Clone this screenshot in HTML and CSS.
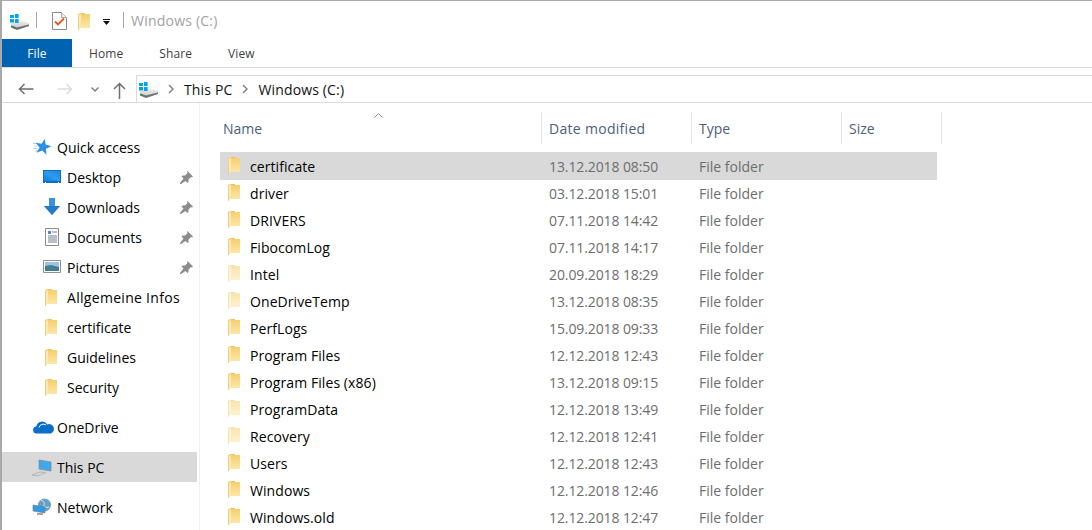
FILE: index.html
```html
<!DOCTYPE html>
<html lang="en">
<head>
<meta charset="utf-8">
<title>Windows (C:)</title>
<link rel="stylesheet" href="styles.css">
</head>
<body>
<svg class="defs" width="0" height="0" aria-hidden="true">
  <defs>
    <linearGradient id="fg" x1="0" y1="0" x2="0" y2="1"><stop offset="0" stop-color="#f5cf6e"/><stop offset="1" stop-color="#fde7a6"/></linearGradient>
    <linearGradient id="scr" x1="0" y1="1" x2="1" y2="0"><stop offset="0" stop-color="#0f7fdc"/><stop offset=".5" stop-color="#2f9af0"/><stop offset="1" stop-color="#1f86e0"/></linearGradient>
    <linearGradient id="disk" x1="0" y1="0" x2="0" y2="1"><stop offset="0" stop-color="#f4f4f4"/><stop offset="1" stop-color="#c4c4c4"/></linearGradient>
    <symbol id="folder" viewBox="0 0 12 17">
      <path d="M3 1h9v14H3z" fill="url(#fg)"/>
      <path d="M3 0h4v1H3z" fill="#e8c368"/>
      <path d="M0 1l3-1v15l-3 2z" fill="#fbe9b5"/>
      <path d="M0 1l3-1v1L1 2v15H0z" fill="#f0cf80"/>
    </symbol>
    <symbol id="drive" viewBox="0 0 20 16">
      <path d="M1 9l9-3 9 3v3L7 15l-6-2z" fill="url(#disk)"/>
      <path d="M1 11.500l6 2 12-3V12L7 16l-6-2.500z" fill="#6f6f6f"/>
      <path d="M2 12h2v2H2z" fill="#3b8f4a"/>
      <path d="M0 1h4v3H0zM5 0h3.600v4H5zM0 5h4v3.500H0zM5 5h3.600v4H5z" fill="#00a4ef"/>
    </symbol>
    <symbol id="pin" viewBox="0 0 13 13">
      <path d="M7.500 0L13 5.500l-1 1-1-.5-2.500 2.500v2.500l-1 1-2-2L1 13H0v-1l3.500-4.500-2-2 1-1H5L7.500 2 7 1z" fill="#8c8c8c"/>
    </symbol>
  </defs>
</svg>
<div class="window">
  <header class="titlebar">
    <svg class="t-drive"><use href="#drive"/></svg>
    <span class="t-sep"></span>
    <svg class="t-check" viewBox="0 0 15 18">
      <path d="M.5.5h9l5 5v12H.5z" fill="#fff" stroke="#8a8a8a"/>
      <path d="M9.500.5v5h5" fill="#eee" stroke="#a8a8a8"/>
      <path d="M3 9.500l3 3 6-6" fill="none" stroke="#e8551f" stroke-width="1.800"/>
    </svg>
    <svg class="t-folder"><use href="#folder"/></svg>
    <svg class="t-drop" viewBox="0 0 7 6"><path d="M0 0h7v1H0zM0 2h7L3.500 6z" fill="#111"/></svg>
    <span class="t-sep t-sep2"></span>
    <span class="t-title">Windows (C:)</span>
  </header>
  <nav class="tabs">
    <span class="tab tab-file">File</span>
    <span class="tab tab-home">Home</span>
    <span class="tab tab-share">Share</span>
    <span class="tab tab-view">View</span>
  </nav>
  <div class="addr-row">
    <div class="nav-btns">
      <svg class="n-back" viewBox="0 0 16 12"><path d="M15.500 6H1.500M6.500 1l-5 5 5 5" fill="none" stroke="#6e6e6e" stroke-width="1.500"/></svg>
      <svg class="n-fwd" viewBox="0 0 16 12"><path d="M.5 6h14M9.500 1l5 5-5 5" fill="none" stroke="#dcdcdc" stroke-width="1.500"/></svg>
      <svg class="n-down" viewBox="0 0 8 5"><path d="M.5.5L4 4 7.500.5" fill="none" stroke="#7a7a7a" stroke-width="1.400"/></svg>
      <svg class="n-up" viewBox="0 0 13 17"><path d="M6.500 17V1.500M1 7l5.500-5.500L12 7" fill="none" stroke="#6e6e6e" stroke-width="1.500"/></svg>
    </div>
    <div class="addr-box">
      <svg class="a-drive"><use href="#drive"/></svg>
      <svg class="a-chev a-chev1" viewBox="0 0 6 10"><path d="M1 1l4 4-4 4" fill="none" stroke="#777" stroke-width="1.300"/></svg>
      <span class="crumb">This PC</span>
      <svg class="a-chev a-chev2" viewBox="0 0 6 10"><path d="M1 1l4 4-4 4" fill="none" stroke="#777" stroke-width="1.300"/></svg>
      <span class="crumb">Windows (C:)</span>
    </div>
  </div>
  <div class="main">
    <aside class="sidebar">
      <div class="side-row top">
        <svg class="s-ico" viewBox="0 0 18 18"><path d="M0 5.500h5M1.500 8h3M0 10.500h4M2 13h3" stroke="#a9d2f3"/><path transform="translate(10 9) rotate(12)" d="M0-8.500L2.100-2.900 8.100-2.600 3.300 1.100 5 6.900 0 3.500-5 6.900-3.300 1.100-8.100-2.600-2.100-2.900z" fill="#2d8fe6"/></svg>
        <span>Quick access</span>
      </div>
      <div class="side-row sub">
        <svg class="s-ico" viewBox="0 0 18 18"><path d="M0 2h18v13H0z" fill="#0e6fc0"/><path d="M1 3h16v10H1z" fill="url(#scr)"/><path d="M2 14h1v1H2zM15 14h1v1h-1z" fill="#fff"/></svg>
        <span>Desktop</span><svg class="pin"><use href="#pin"/></svg>
      </div>
      <div class="side-row sub">
        <svg class="s-ico" viewBox="0 0 18 18"><path d="M6 0h6v8h5l-8 9-8-9h5z" fill="#3d8fe0"/><path d="M9 17L1 8h16z" fill="#2a78c8"/></svg>
        <span>Downloads</span><svg class="pin"><use href="#pin"/></svg>
      </div>
      <div class="side-row sub">
        <svg class="s-ico" viewBox="0 0 18 18"><path d="M2.500.5h13v17h-13z" fill="#fff" stroke="#8b8b8b"/><path d="M5 3h3v3H5z" fill="#4a8ed0"/><path d="M9 4h5M5 8h9M5 10h9M5 12h9M5 14h9" stroke="#6f7f8f"/></svg>
        <span>Documents</span><svg class="pin"><use href="#pin"/></svg>
      </div>
      <div class="side-row sub">
        <svg class="s-ico" viewBox="0 0 18 18"><path d="M.5 2.500h17v12H.5z" fill="#fff" stroke="#8f8f8f"/><path d="M2 4h14v5H2z" fill="#9cc4e4"/><path d="M2 8l6-1 8 2v4H2z" fill="#3f7f8f"/></svg>
        <span>Pictures</span><svg class="pin"><use href="#pin"/></svg>
      </div>
      <div class="side-row sub"><svg class="s-fld"><use href="#folder"/></svg><span class="wide">Allgemeine Infos</span></div>
      <div class="side-row sub"><svg class="s-fld"><use href="#folder"/></svg><span>certificate</span></div>
      <div class="side-row sub"><svg class="s-fld"><use href="#folder"/></svg><span>Guidelines</span></div>
      <div class="side-row sub"><svg class="s-fld"><use href="#folder"/></svg><span>Security</span></div>
      <div class="side-row top group">
        <svg class="s-ico" viewBox="0 0 18 18"><path d="M4 15.500a3.500 3.500 0 0 1-.7-7 6 6 0 0 1 11-2 4.500 4.500 0 0 1 3.700 9z" fill="#0a6fc8"/><path d="M6 9.500a4.500 4.500 0 0 1 7-2.500" fill="none" stroke="#fff"/></svg>
        <span>OneDrive</span>
      </div>
      <div class="side-row top group selected">
        <svg class="s-ico" viewBox="0 0 18 18"><path d="M6 2l12 2v9L6 11z" fill="#3fa9ee" stroke="#7a8a96" stroke-width=".7"/><path d="M-1 17l8-3 6 .5-8 3.500z" fill="none" stroke="#b5b5b5"/></svg>
        <span>This PC</span>
      </div>
      <div class="side-row top group">
        <svg class="s-ico" viewBox="0 0 18 18"><circle cx="11.500" cy="7" r="6.500" fill="#6a9fc4"/><path d="M8 2c3 1 4 3 3 5s3 3 5 2" fill="none" stroke="#d9e7f0"/><path d="M0 7l12 2v6L0 13z" fill="#2f9be6" stroke="#6a7a88" stroke-width=".6"/><path d="M4 16h6" stroke="#8a8a8a" stroke-width="1.500"/></svg>
        <span>Network</span>
      </div>
    </aside>
    <section class="content">
      <div class="head">
        <div class="hcell hname">Name<svg class="caret" viewBox="0 0 9 5"><path d="M.5 4.500L4.500.5l4 4" fill="none" stroke="#8a8a8a"/></svg></div>
        <div class="hcell hdate">Date modified</div>
        <div class="hcell">Type</div>
        <div class="hcell">Size</div>
      </div>
      <div class="list">
        <div class="row selected"><span class="name"><svg class="fld"><use href="#folder"/></svg>certificate</span><span class="meta date">13.12.2018 08:50</span><span class="meta">File folder</span></div>
        <div class="row"><span class="name"><svg class="fld"><use href="#folder"/></svg>driver</span><span class="meta date">03.12.2018 15:01</span><span class="meta">File folder</span></div>
        <div class="row"><span class="name"><svg class="fld"><use href="#folder"/></svg>DRIVERS</span><span class="meta date">07.11.2018 14:42</span><span class="meta">File folder</span></div>
        <div class="row"><span class="name"><svg class="fld"><use href="#folder"/></svg>FibocomLog</span><span class="meta date">07.11.2018 14:17</span><span class="meta">File folder</span></div>
        <div class="row"><span class="name"><svg class="fld faded"><use href="#folder"/></svg>Intel</span><span class="meta date">20.09.2018 18:29</span><span class="meta">File folder</span></div>
        <div class="row"><span class="name"><svg class="fld faded"><use href="#folder"/></svg>OneDriveTemp</span><span class="meta date">13.12.2018 08:35</span><span class="meta">File folder</span></div>
        <div class="row"><span class="name"><svg class="fld"><use href="#folder"/></svg>PerfLogs</span><span class="meta date">15.09.2018 09:33</span><span class="meta">File folder</span></div>
        <div class="row"><span class="name"><svg class="fld"><use href="#folder"/></svg>Program Files</span><span class="meta date">12.12.2018 12:43</span><span class="meta">File folder</span></div>
        <div class="row"><span class="name"><svg class="fld"><use href="#folder"/></svg>Program Files (x86)</span><span class="meta date">13.12.2018 09:15</span><span class="meta">File folder</span></div>
        <div class="row"><span class="name"><svg class="fld faded"><use href="#folder"/></svg>ProgramData</span><span class="meta date">12.12.2018 13:49</span><span class="meta">File folder</span></div>
        <div class="row"><span class="name"><svg class="fld faded"><use href="#folder"/></svg>Recovery</span><span class="meta date">12.12.2018 12:41</span><span class="meta">File folder</span></div>
        <div class="row"><span class="name"><svg class="fld"><use href="#folder"/></svg>Users</span><span class="meta date">12.12.2018 12:43</span><span class="meta">File folder</span></div>
        <div class="row"><span class="name"><svg class="fld"><use href="#folder"/></svg>Windows</span><span class="meta date">12.12.2018 12:46</span><span class="meta">File folder</span></div>
        <div class="row"><span class="name"><svg class="fld"><use href="#folder"/></svg>Windows.old</span><span class="meta date">12.12.2018 12:47</span><span class="meta">File folder</span></div>
      </div>
    </section>
  </div>
</div>
</body>
</html>
```
FILE: styles.css
```css
* { box-sizing: border-box; }
html, body { margin: 0; padding: 0; height: 100%; overflow: hidden; background: #fff; }
body { font-family: "Open Sans", "Noto Sans", sans-serif; font-size: 14px; color: #000; }
.defs { position: absolute; }
svg { display: block; flex: none; overflow: visible; }

.window { width: 1092px; height: 530px; display: flex; flex-direction: column; border-left: 2px solid #a9a9a9; border-top: 1px solid #a9a9a9; overflow: hidden; }

.titlebar { height: 38px; display: flex; align-items: center; flex: none; }
.t-drive { width: 20px; height: 16px; margin-left: 8px; margin-top: 3px; }
.t-sep { width: 1px; height: 16px; background: #a6a6a6; margin-left: 6px; }
.t-check { width: 15px; height: 18px; margin-left: 15px; margin-top: 2px; }
.t-folder { width: 12px; height: 17px; margin-left: 11px; margin-top: 2px; }
.t-drop { width: 7px; height: 6px; margin-left: 13px; margin-top: 4px; }
.t-sep2 { margin-left: 13px; }
.t-title { margin-left: 7px; color: #a2a2a2; letter-spacing: .22px; }

.tabs { height: 29px; display: flex; flex: none; font-size: 12px; color: #3f3f3f; border-bottom: 1px solid #dadada; letter-spacing: .1px; }
.tab { display: flex; align-items: center; justify-content: center; height: 28px; }
.tab-file { width: 70px; background: #0063b1; color: #fff; }
.tab-home { margin-left: 17px; }
.tab-share { margin-left: 36px; }
.tab-view { margin-left: 36px; }

.addr-row { height: 35px; display: flex; flex: none; align-items: flex-start; padding-top: 7px; border-bottom: 1px solid #dadada; }
.nav-btns { width: 134px; height: 28px; display: flex; align-items: center; flex: none; }
.n-back { width: 16px; height: 12px; margin-left: 16px; }
.n-fwd { width: 16px; height: 12px; margin-left: 23px; }
.n-down { width: 8px; height: 5px; margin-left: 18px; }
.n-up { width: 13px; height: 17px; margin-left: 14px; margin-top: 2px; }
.addr-box { flex: 1; height: 28px; display: flex; align-items: center; border: 1px solid #d9d9d9; border-right: 0; }
.a-drive { width: 20px; height: 16px; margin-left: 2px; margin-top: 2px; }
.a-chev { width: 6px; height: 10px; }
.a-chev1 { margin-left: 9px; margin-right: 10px; }
.a-chev2 { margin-left: 10px; margin-right: 10px; }
.crumb { color: #111; letter-spacing: .15px; }

.main { flex: 1; display: flex; min-height: 0; }
.sidebar { width: 198px; flex: none; border-right: 1px solid #efefef; padding-top: 29px; }
.side-row { height: 30px; display: flex; align-items: center; gap: 6px; width: 195px; color: #000; }
.side-row.top { padding-left: 31px; }
.side-row.sub { padding-left: 41px; }
.side-row.group { margin-top: 10px; }
.side-row.selected { background: #d9d9d9; }
.s-ico { width: 18px; height: 18px; }
.s-fld { width: 12px; height: 17px; margin-left: 2px; margin-right: 4px; }
.wide { letter-spacing: .3px; }
.pin { width: 13px; height: 13px; margin-left: auto; margin-right: 4px; }

.content { flex: 1; min-width: 0; padding-left: 20px; }
.head { display: grid; grid-template-columns: 322px 150px 150px 100px; height: 32px; margin-top: 9px; color: #4c607a; width: 722px; }
.hcell { display: flex; align-items: center; padding-left: 7px; border-right: 1px solid #e5e5e5; position: relative; }
.hname { padding-left: 3px; }
.hdate { letter-spacing: .3px; }
.caret { position: absolute; left: 154px; top: 1px; width: 9px; height: 5px; }
.list { margin-top: 9px; }
.row { display: grid; grid-template-columns: 321px 150px 150px 96px; width: 717px; height: 27px; align-items: center; }
.row.selected { background: #d9d9d9; box-shadow: 0 -1px 0 #d9d9d9; }
.name { display: flex; align-items: center; padding-left: 8px; color: #000; letter-spacing: .08px; }
.fld { width: 12px; height: 17px; margin-right: 10px; margin-top: -2px; }
.faded { opacity: .55; }
.meta { padding-left: 8px; color: #6d6d6d; }
.date { letter-spacing: -.1px; }
```
